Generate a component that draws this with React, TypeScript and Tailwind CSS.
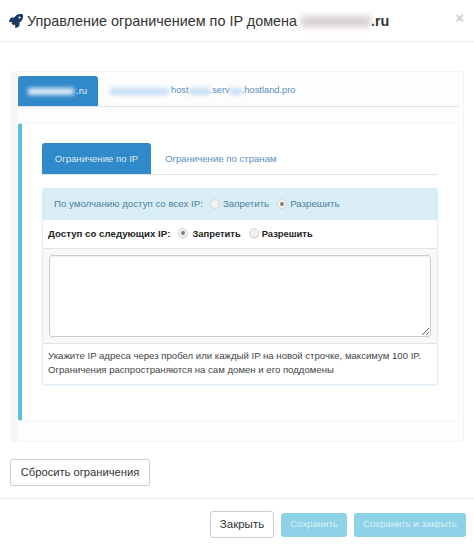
import { FaRocket } from "react-icons/fa";

function Radio({ checked }: { checked?: boolean }) {
  return (
    <span className="inline-flex h-[10px] w-[10px] -translate-y-[1px] items-center justify-center rounded-full border border-[#d8d8d8] bg-[#f1f1f1] shadow-[0_1px_1px_#e8e8e8]">
      {checked && <span className="h-[4px] w-[4px] rounded-full bg-[#808080]" />}
    </span>
  );
}

export default function App() {
  return (
    <div className="relative h-[549px] w-[474px] overflow-hidden bg-white font-['Liberation_Sans',sans-serif] text-[#333]">
      {/* Header */}
      <div className="flex h-[42px] items-center border-b border-[#ececec] pl-[9px] pr-[10px]">
        <FaRocket className="mr-[4px] h-[14px] w-[14px] shrink-0 text-[#1c3a5e]" />
        <h4 className="text-[14.4px] leading-5 whitespace-nowrap">
          Управление ограничением по IP домена
          <span className="ml-[4px] inline-block h-[11px] w-[70px] translate-y-[1px] bg-[#d8cfcf] blur-[3px]" />
          <span className="font-semibold">.ru</span>
        </h4>
        <span className="ml-auto -translate-y-[3px] text-[15px] font-bold leading-none text-[#cfcfcf]">×</span>
      </div>

      {/* Body */}
      <div className="px-[10px] pt-[29px]">
        <div className="h-[371px] rounded-[3px] border border-l-[7px] border-[#f3f3f3] border-l-[#f6f6f6] bg-[#fdfdfd] pl-[1px] pr-[4px] pt-[4px]">
          <div className="flex h-[31px] border-b border-[#e2e2e2] text-[9.3px] leading-none">
            <div className="flex w-[80px] items-center rounded-t-[3px] bg-[#3089c9] pl-[10px] text-[#e4f0f9]">
              <span className="h-[7px] w-[46px] bg-[#dcebf8] blur-[2px]" />
              <span className="ml-[2px] text-[9.6px]">.ru</span>
            </div>
            <div className="flex items-center pl-[12px] text-[#5b8fc0]">
              <span className="h-[7px] w-[59px] bg-[#c5def5] blur-[2px]" />
              <span className="ml-[2px]">host</span>
              <span className="h-[7px] w-[21px] bg-[#c5def5] blur-[2px]" />
              <span>.serv</span>
              <span className="h-[7px] w-[12px] bg-[#c5def5] blur-[2px]" />
              <span>.hostland.pro</span>
            </div>
          </div>

          {/* Info card */}
          <div className="mt-[16px] h-[298px] rounded-[3px] border-y border-r border-l-4 border-[#f4f4f4] border-l-[#5bc0de] bg-white pl-[20px] pr-[20px] pt-[19px]">
            <div className="flex h-[32px] border-b border-[#e2e2e2] text-[9.6px] leading-none">
              <div className="flex w-[109px] items-center justify-center rounded-t-[3px] bg-[#3089c9] text-[#dcebf7]">
                Ограничение по IP
              </div>
              <div className="flex items-center pl-[14px] text-[#5b8fc0]">Ограничение по странам</div>
            </div>

            <div className="mt-[13px] rounded-[3px] border border-[#d9edf7] bg-white shadow-[0_1px_1px_rgba(0,0,0,0.05)]">
              <div className="flex h-[31px] items-center rounded-t-[3px] bg-[#d9edf7] pl-[11px] text-[9.7px] text-[#4d7f9b]">
                <span className="mr-[7px]">По умолчанию доступ со всех IP:</span>
                <Radio />
                <span className="ml-[3px] mr-[8px]">Запретить</span>
                <Radio checked />
                <span className="ml-[3px]">Разрешить</span>
              </div>
              <div className="flex h-[29px] items-center border-b border-[#e2e2e2] pl-[5px] text-[9.7px] font-bold text-[#222]">
                <span className="mr-[8px]">Доступ со следующих IP:</span>
                <Radio checked />
                <span className="ml-[4px] mr-[8px] text-[9.4px]">Запретить</span>
                <Radio />
                <span className="ml-[3px] text-[9.4px]">Разрешить</span>
              </div>
              <div className="border-b border-[#e2e2e2] bg-[#f8f8f8] px-[6px] py-[6px]">
                <textarea
                  readOnly
                  className="block h-[82px] w-full rounded-[3px] border border-[#ccc] bg-white shadow-[inset_0_1px_1px_rgba(0,0,0,0.075)]"
                />
              </div>
              <div className="whitespace-nowrap px-[5px] pb-[7px] pt-[5px] text-[9.6px] leading-[14px] text-[#444]">
                Укажите IP адреса через пробел или каждый IP на новой строчке, максимум 100 IP.
                <br />
                Ограничения распространяются на сам домен и его поддомены
              </div>
            </div>
          </div>
        </div>

        <button className="mt-[17px] h-[27px] w-[140px] rounded-[3px] border border-[#ccc] bg-white text-[11.2px] text-[#333]">
          Сбросить ограничения
        </button>
      </div>

      {/* Footer */}
      <div className="mt-[12px] flex items-center justify-end gap-[7px] border-t border-[#ececec] pr-[8px] pt-[12px]">
        <button className="h-[27px] w-[64px] rounded-[3px] border border-[#ccc] bg-white text-[11.5px] text-[#333]">
          Закрыть
        </button>
        <button className="h-[24px] w-[66px] rounded-[3px] bg-[#8dd2e6] text-[9.6px] text-[#d8f0f7]">Сохранить</button>
        <button className="h-[24px] w-[112px] rounded-[3px] bg-[#8dd2e6] text-[9.6px] text-[#d8f0f7]">
          Сохранить и закрыть
        </button>
      </div>
    </div>
  );
}
